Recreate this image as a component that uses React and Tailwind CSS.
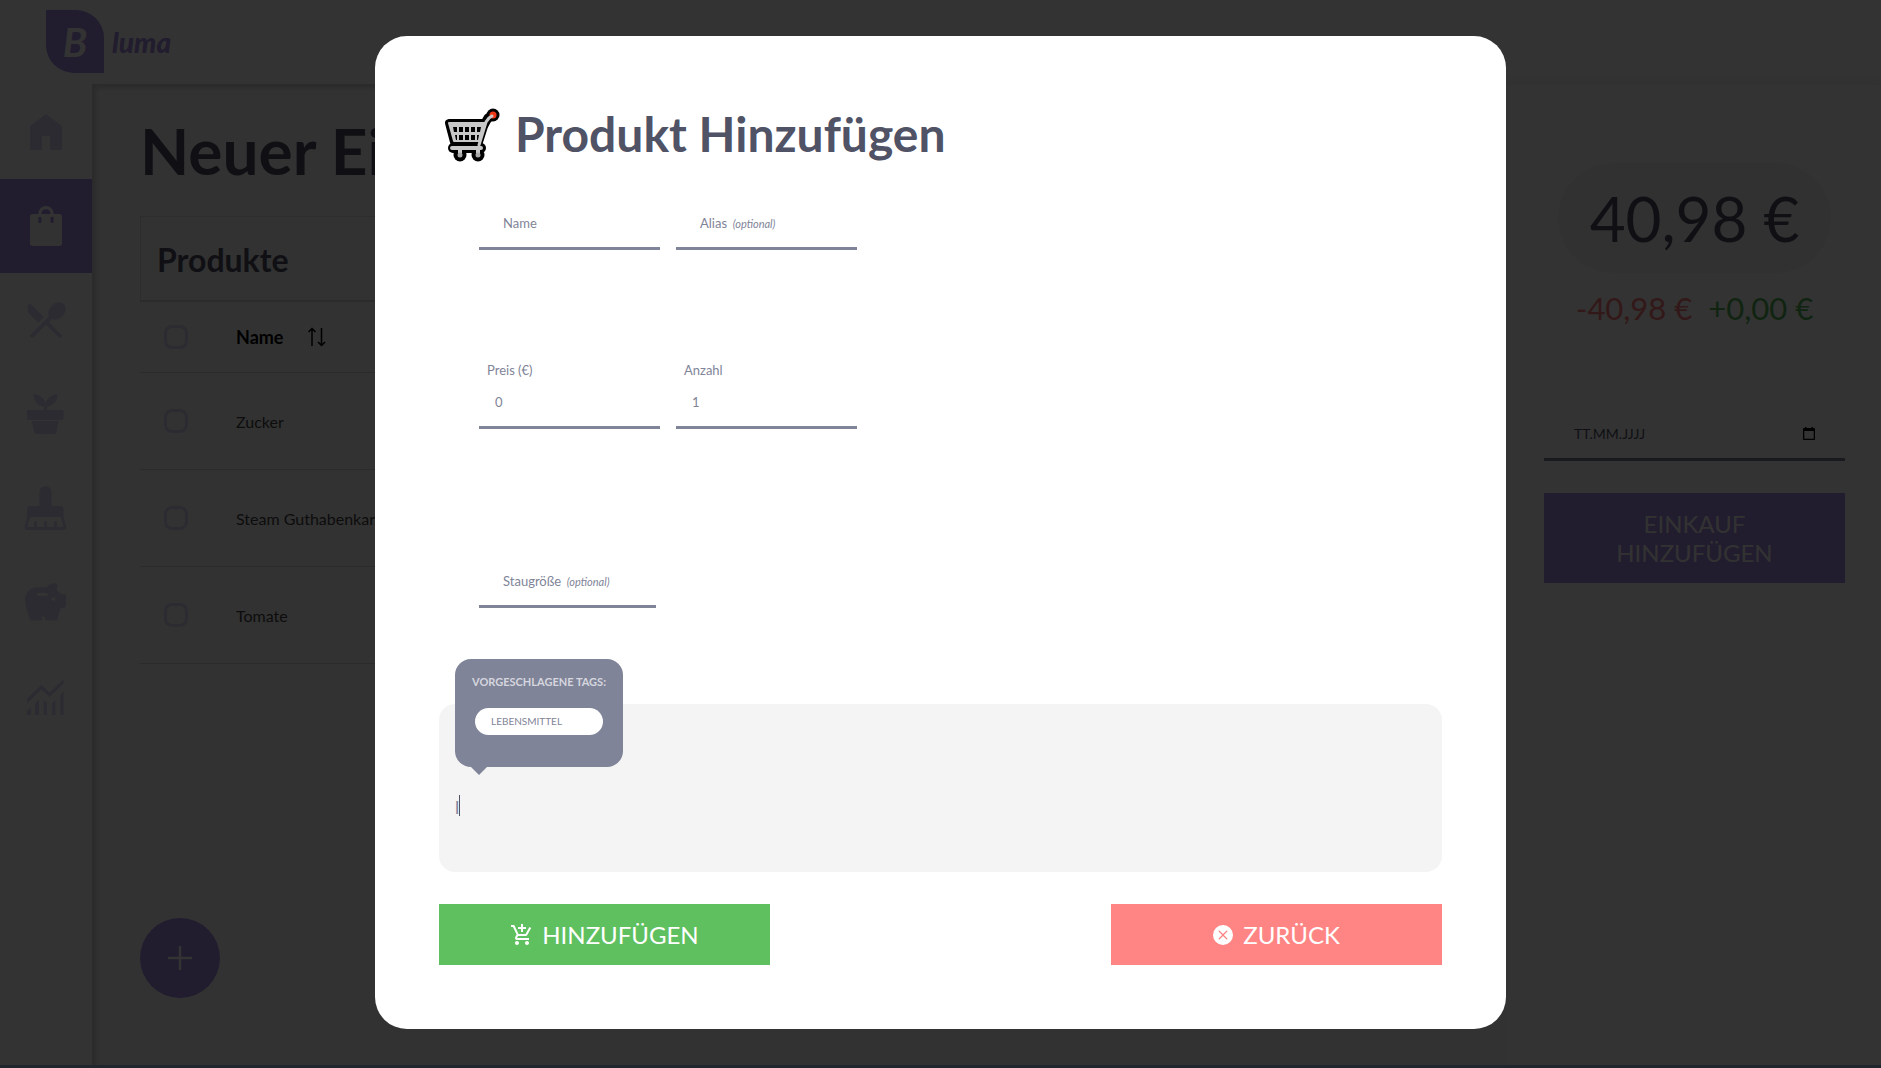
import React from "react";
import { MdRestaurantMenu, MdOutlineAddShoppingCart } from "react-icons/md";
import { BsXCircleFill } from "react-icons/bs";

function Glyph({ children }) {
  return (
    <svg viewBox="0 0 24 24" className="size-12" fill="currentColor" aria-hidden="true">
      {children}
    </svg>
  );
}

const navItems = [
  { label: "Start", icon: <Glyph><path d="M4 21V9l8-6 8 6v12h-6v-7h-4v7Z" /></Glyph> },
  {
    label: "Einkauf",
    active: true,
    icon: (
      <Glyph>
        <path fillRule="evenodd" d="M5.3 22A1.4 1.4 0 0 1 4 20.600V7.400A1.400 1.400 0 0 1 5.300 6H8.200C8.200 3.500 9.900 2 12 2s3.800 1.500 3.800 4h2.900A1.400 1.400 0 0 1 20 7.400v13.200A1.400 1.400 0 0 1 18.700 22ZM9.700 6h4.600C14.300 4.500 13.300 3.600 12 3.600S9.700 4.500 9.700 6ZM8.200 7.500v2.300a.75.75 0 0 0 1.500 0V7.500ZM14.300 7.500v2.300a.75.75 0 0 0 1.500 0V7.500Z" />
      </Glyph>
    ),
  },
  { label: "Rezepte", icon: <MdRestaurantMenu className="size-12" /> },
  {
    label: "Pflanzen",
    icon: (
      <Glyph>
        <path d="M2.500 10H11V8.400C8 8 5.700 5.500 5.700 2 9 2.300 11.400 4.300 11.750 7 12.100 4.300 14.500 2.300 17.800 2 17.800 5.500 15.500 8 12.500 8.400V10h8.300v4a1 1 0 0 1-1 1H3.500a1 1 0 0 1-1-1ZM4.800 15.500h13.700L17.200 21.200a1 1 0 0 1-1 .8H7.100a1 1 0 0 1-1-.8Z" />
      </Glyph>
    ),
  },
  {
    label: "Haushalt",
    icon: (
      <Glyph>
        <path fillRule="evenodd" d="M8.700 11V4a3 3 0 0 1 6.100 0v7h4.500a1.500 1.500 0 0 1 1.500 1.500v3.700l1.300 4.800a1.500 1.500 0 0 1-1.400 2H2.700a1.500 1.500 0 0 1-1.400-2l1.200-4.800v-3.700A1.500 1.500 0 0 1 4 11ZM4 16.500 2.800 21.500H6V19.200a.75.75 0 0 1 1.500 0v2.300H11V19.200a.75.75 0 0 1 1.500 0v2.300H16V19.200a.75.75 0 0 1 1.500 0v2.300h3.200L19.400 16.500Z" />
      </Glyph>
    ),
  },
  {
    label: "Finanzen",
    icon: (
      <Glyph>
        <path fillRule="evenodd" d="M4.100 21.300C3.300 18.500 1.500 14.500 1.500 10.800A6 6 0 0 1 7.600 4.600H12.200C13.200 3.300 15 2.500 16.700 2.700 17.800 2.800 18 3.800 17.600 4.700L17.300 6 19.500 8H21.500a.5.5 0 0 1 .5.5V14a.7.7 0 0 1-.5.700L19.200 15.400 17.500 21.300H11.500V19.400H10V21.300ZM7.700 7.500V9h5V7.500ZM15.700 9.600a.9.9 0 1 0 .01 0Z" />
      </Glyph>
    ),
  },
  {
    label: "Statistik",
    icon: (
      <Glyph>
        <path d="M2.500 13.400 9.700 6.400 13.800 10.300 20.800 3.500V5.800L13.800 12.500 9.700 8.700 2.500 15.700ZM2.500 21.500V19.200L4.500 17.700V21.500ZM6.500 21.500V15.700L8.500 13.800V21.500ZM10.800 21.500V13.900L12.500 15.400V21.500ZM15 21.500V15.500L16.700 13.900V21.500ZM19.200 21.500V11.400L20.800 9.800V21.500Z" />
      </Glyph>
    ),
  },
];

const products = ["Zucker", "Steam Guthabenkarte", "Tomate"];

function Check({ label }) {
  return (
    <input
      type="checkbox"
      aria-label={label}
      className="block size-6 appearance-none rounded-lg border-3 border-[#dcd7f5]"
    />
  );
}

function Cart() {
  return (
    <svg viewBox="-1 -2 64 62" className="h-[62px] w-16 shrink-0" aria-hidden="true">
      <g strokeLinejoin="round" strokeLinecap="round">
        <g fill="#000" stroke="#000">
          <path d="M9 18h36l-6 19H14Z" strokeWidth="8" />
          <path d="M44 20 48 13 53 11" strokeWidth="9" fill="none" />
          <path d="M13 43h28" strokeWidth="10" fill="none" />
          <circle cx="53" cy="10" r="6.500" stroke="none" />
          <circle cx="20" cy="50" r="6.500" stroke="none" />
          <circle cx="38" cy="50" r="6.500" stroke="none" />
        </g>
        <path d="M9 18h36l-6 18H14Z" fill="#c8c8c8" stroke="#c8c8c8" strokeWidth="2" />
        <circle cx="53" cy="10" r="3.500" fill="#f03a17" />
        <path d="M39 40 46 17 49 13 52 11" fill="none" stroke="#c8c8c8" strokeWidth="3" />
        <path d="M12 43h29M20 44v5M38 44v5" fill="none" stroke="#c8c8c8" strokeWidth="4" />
      </g>
      <path d="M14 38.500h23" stroke="#000" strokeWidth="2" />
      <circle cx="20" cy="50" r="2.500" fill="#a8a8a8" />
      <circle cx="38" cy="50" r="2.500" fill="#a8a8a8" />
      <path d="M13 22h4v5h-3ZM19 22h4v5h-4ZM25 22h4v5h-4ZM31 22h4v5h-4ZM37 22h4l-1 5h-3ZM15 30h2v5h-1ZM19 30h4v5h-4ZM25 30h4v5h-4ZM31 30h4v5h-4ZM37 30h2l-1 5h-1Z" fill="#000" />
    </svg>
  );
}

function EmptyField({ id, label, optional, width }) {
  return (
    <div className={`relative ${width}`}>
      <label htmlFor={id} className="absolute top-[9px] left-6 text-[13px] leading-5 whitespace-nowrap">
        {label}
        {optional && <em className="ml-[3px] text-[11px]"> (optional)</em>}
      </label>
      <input id={id} className="block h-[46px] w-full border-b-3 border-[#7f8498] bg-transparent px-4 outline-none" />
    </div>
  );
}

function NumberField({ id, label, value }) {
  return (
    <div className="w-[181px]">
      <label htmlFor={id} className="ml-2 block text-[13px] leading-5">{label}</label>
      <input
        id={id}
        defaultValue={value}
        inputMode="decimal"
        className="block h-[49px] w-full border-b-3 border-[#7f8498] bg-transparent px-4 pb-[2px] text-[13px] outline-none"
      />
    </div>
  );
}

export default function App() {
  return (
    <div className="relative flex h-screen flex-col overflow-hidden bg-white font-[Lato,sans-serif] text-[#505266]">
      <header className="flex h-21 shrink-0 items-start gap-2 pt-[10px] pl-[46px] text-[#a58ce6]">
        <div className="flex h-[63px] w-[58px] items-center justify-center rounded-tr-[28px] rounded-bl-[28px] bg-[#a58ce6] text-[40px] font-bold text-white italic">
          B
        </div>
        <span className="mt-3 text-[28px] leading-10 font-black italic">luma</span>
      </header>

      <div className="flex min-h-0 grow">
        <nav className="w-23 shrink-0 pt-px">
          {navItems.map((item) => (
            <a
              key={item.label}
              href="#"
              aria-label={item.label}
              className={`flex h-[94px] items-center justify-center ${item.active ? "bg-[#a58ce6] text-[#fafafa]" : "text-[#dcd7f5]"}`}
            >
              {item.icon}
            </a>
          ))}
        </nav>

        <main className="relative flex grow flex-col bg-[#fafafa] px-12 pt-7 shadow-[inset_4px_4px_5px_rgba(0,0,0,0.16)]">
          <h1 className="text-[64px] leading-[78px] font-bold">Neuer Einkauf</h1>
          <table className="mt-[26px] w-full text-left text-black">
            <caption className="h-[84px] border-t border-l border-[#e0e0e0] bg-[#f7f7f7] px-4 pt-2 text-left text-[32px] leading-[70px] font-bold text-[#505266]">
              Produkte
            </caption>
            <thead>
              <tr className="h-[71px] border-t-2 border-b border-[#d6d6d6] bg-[#f7f7f7]">
                <th className="w-24 pl-6"><Check label="Alle auswählen" /></th>
                <th className="text-lg">
                  <span className="flex items-center gap-6">
                    Name
                    <svg viewBox="0 0 20 20" className="size-5" fill="none" stroke="currentColor" strokeWidth="1.500" aria-hidden="true">
                      <path d="M5 19V2M1.500 5 5 1.500 8.500 5M14.500 1v17M11 15l3.500 3.500L18 15" />
                    </svg>
                  </span>
                </th>
              </tr>
            </thead>
            <tbody>
              {products.map((name) => (
                <tr key={name} className="h-[97px] border-b border-[#d6d6d6]">
                  <td className="pl-6"><Check label={name} /></td>
                  <td className="pt-[2px] text-base text-[#444444]">{name}</td>
                </tr>
              ))}
            </tbody>
          </table>
          <button aria-label="Neues Produkt" className="mt-auto mb-[70px] flex size-20 shrink-0 items-center justify-center rounded-full bg-[#a58ce6] text-white">
            <svg viewBox="0 0 24 24" className="size-6" stroke="currentColor" strokeWidth="2.500" aria-hidden="true">
              <path d="M12 0v24M0 12h24" />
            </svg>
          </button>
        </main>

        <aside className="flex w-[375px] shrink-0 flex-col items-center border-t border-[#f5f5f5] pt-[78px] pr-9 pl-[38px] shadow-[0_0_16px_rgba(0,0,0,0.1)]">
          <div className="flex h-[110px] items-center rounded-[55px] bg-[#f5f5f5] px-8 text-[62px] whitespace-nowrap">40,98 €</div>
          <div className="mt-[15px] flex gap-4 text-[31px] leading-10">
            <span className="text-[#fa7878]">-40,98 €</span>
            <span className="text-[#50b455]">+0,00 €</span>
          </div>
          <div className="mt-[81px] flex h-[52px] w-full items-center border-b-3 border-[#7f8498] px-[30px]">
            <input aria-label="Datum" defaultValue="TT.MM.JJJJ" className="min-w-0 grow bg-transparent text-sm outline-none" />
            <svg viewBox="0 0 12 13" className="h-[13px] w-3 text-black" aria-hidden="true">
              <path fill="currentColor" fillRule="evenodd" d="M2 0h1.500v1h5V0H10v1h1a1 1 0 0 1 1 1v10a1 1 0 0 1-1 1H1a1 1 0 0 1-1-1V2a1 1 0 0 1 1-1h1ZM1.300 4v7.700h9.400V4Z" />
            </svg>
          </div>
          <button className="mt-8 w-full bg-[#a58ce6] px-8 py-4 text-2xl leading-[29px] text-[#fafafa]">EINKAUF HINZUFÜGEN</button>
        </aside>
      </div>

      <div className="absolute inset-0 flex flex-col border-b-3 border-[#1f262d] bg-black/80 bg-clip-padding px-[375px] pt-9 pb-9">
        <form role="dialog" aria-labelledby="dialog-title" className="flex grow flex-col rounded-[32px] bg-white px-16 pt-[67px] pb-16 text-[#7f8498]">
          <div className="flex items-center gap-3">
            <Cart />
            <h2 id="dialog-title" className="text-5xl leading-[62px] font-bold text-[#505266]">Produkt Hinzufügen</h2>
          </div>

          <div className="mt-[39px] flex gap-4 pl-10">
            <EmptyField id="name" label="Name" width="w-[181px]" />
            <EmptyField id="alias" label="Alias" optional width="w-[181px]" />
          </div>
          <div className="mt-[110px] flex gap-4 pl-10">
            <NumberField id="price" label="Preis (€)" value="0" />
            <NumberField id="count" label="Anzahl" value="1" />
          </div>
          <div className="mt-[133px] pl-10">
            <EmptyField id="size" label="Staugröße" optional width="w-[177px]" />
          </div>

          <div className="relative mt-24 flex h-[168px] items-center rounded-2xl bg-[#f4f4f4] px-4">
            <div className="absolute -top-[45px] left-4 flex h-[108px] w-[168px] flex-col items-center rounded-2xl bg-[#7f8498] pt-[15px]">
              <p className="text-[11px] leading-4 font-bold whitespace-nowrap text-[#d5d6de]">VORGESCHLAGENE TAGS:</p>
              <button type="button" className="mt-[18px] h-[27px] w-32 rounded-full bg-white px-4 text-left text-[10px]">LEBENSMITTEL</button>
              <span className="absolute top-full left-4 border-x-8 border-t-8 border-x-transparent border-t-[#7f8498]" />
            </div>
            <div className="relative mt-[38px] w-full">
              <input aria-label="Tags" defaultValue="l" className="block w-full bg-transparent text-lg leading-6 outline-none" />
              <span className="absolute top-0 left-1 h-[21px] w-px bg-[#505266]" />
            </div>
          </div>

          <div className="mt-8 flex justify-between text-2xl leading-[29px] text-white">
            <button type="button" className="flex w-[33%] items-center justify-center gap-2 bg-[#5fc060] py-4">
              <MdOutlineAddShoppingCart className="size-6" />
              HINZUFÜGEN
            </button>
            <button type="button" className="flex w-[33%] items-center justify-center gap-[10px] bg-[#ff8585] py-4">
              <BsXCircleFill className="size-5" />
              ZURÜCK
            </button>
          </div>
        </form>
      </div>
    </div>
  );
}
